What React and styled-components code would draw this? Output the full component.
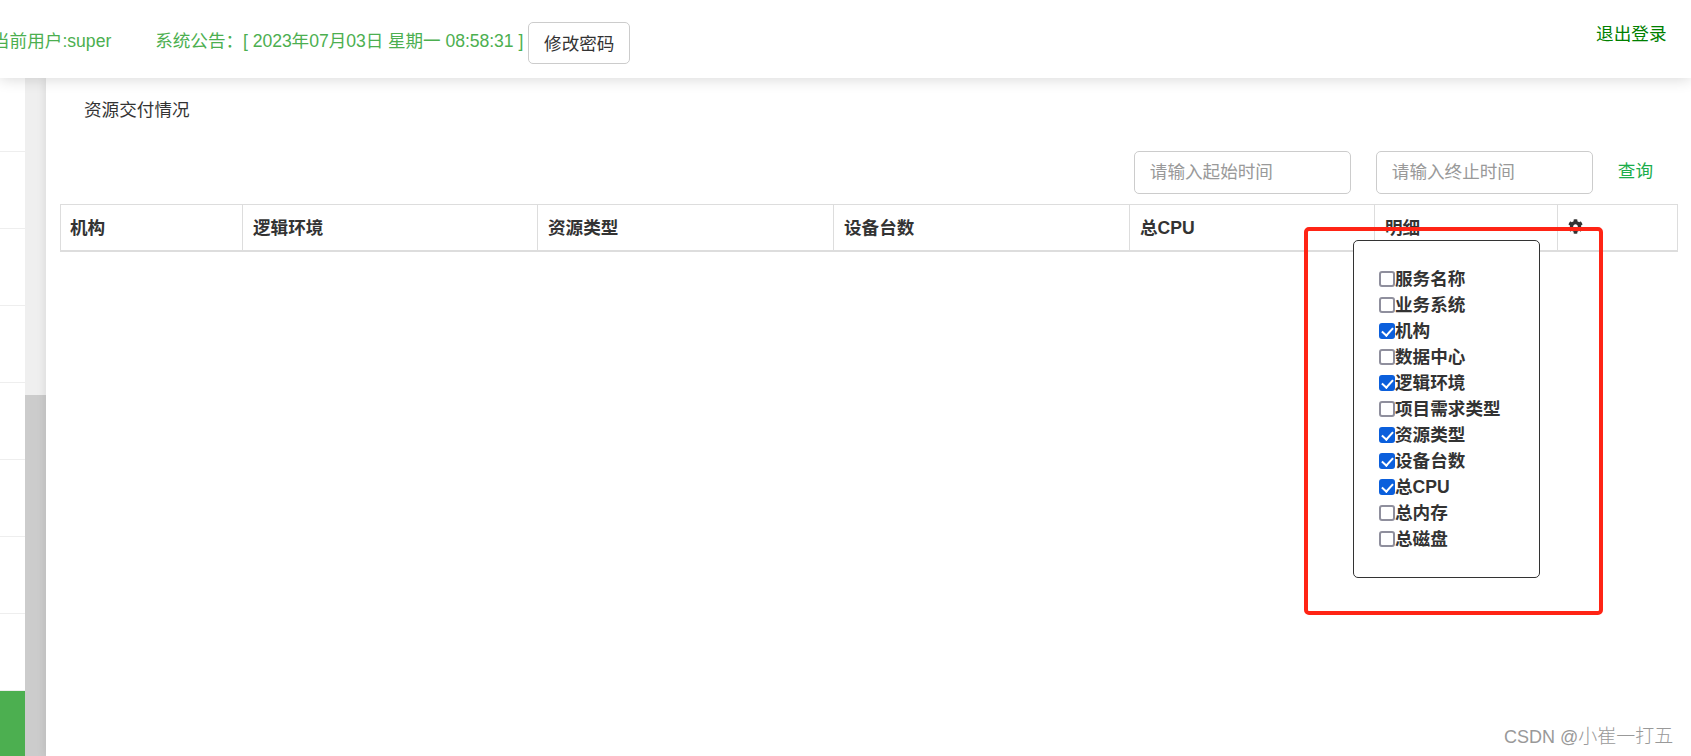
import React from "react";
import styled, { createGlobalStyle } from "styled-components";
import { FaCog } from "react-icons/fa";

const Global = createGlobalStyle`
  html, body { margin: 0; padding: 0; background: #fff; }
  body { font-family: "Liberation Sans", "Noto Sans CJK SC", sans-serif; font-size: 17.6px; color: #333; overflow: hidden; }
  * { box-sizing: border-box; }
`;

const Page = styled.div`
  position: relative;
  width: 1691px;
  height: 756px;
  overflow: hidden;
  display: flex;
  flex-direction: column;
`;

const Header = styled.header`
  position: relative;
  z-index: 2;
  flex: 0 0 78px;
  display: flex;
  align-items: flex-start;
  padding: 22px 24.5px 0 0;
  background: #fff;
  box-shadow: 0 1px 14px rgba(0, 0, 0, 0.16);
`;

const Notice = styled.span`
  margin: 7px 0 0 ${(p) => p.$left}px;
  color: #4caf50;
  line-height: 24px;
  letter-spacing: ${(p) => p.$tracking || 0}px;
  white-space: nowrap;
`;

const PasswordButton = styled.button`
  margin-left: 5px;
  width: 102px;
  height: 42px;
  padding: 0 0 2px;
  font: inherit;
  color: #333;
  background: #fff;
  border: 1px solid #ccc;
  border-radius: 5px;
`;

const Logout = styled.a`
  margin-left: auto;
  color: #008000;
  line-height: 24px;
`;

const Body = styled.div`
  flex: 1;
  display: flex;
  min-height: 0;
`;

const Sidebar = styled.nav`
  flex: 0 0 25px;
  overflow: hidden;
  background: #fff;
  display: flex;
  flex-direction: column;
  margin-top: -3px;
`;

const SideRow = styled.div`
  flex: 0 0 77px;
  border-bottom: 1px solid #eee;
`;

const SideActive = styled.div`
  flex: 1;
  background: #4caf50;
`;

const ScrollTrack = styled.div`
  flex: 0 0 21px;
  background: #efefef;
  padding-top: 317px;
  display: flex;
`;

const ScrollThumb = styled.div`
  flex: 1;
  background: #ccc;
`;

const Main = styled.main`
  position: relative;
  flex: 1;
  min-width: 0;
  padding: 20px 13px 0 14px;
  background: #fff;
  box-shadow: -2px 0 8px rgba(0, 0, 0, 0.08);
`;

const Title = styled.h2`
  margin: 0 0 29px 24px;
  font-size: 17.6px;
  font-weight: 400;
  line-height: 24px;
  color: #333;
`;

const Toolbar = styled.div`
  display: flex;
  justify-content: flex-end;
  align-items: center;
  gap: 25px;
  padding-right: 25px;
  margin-bottom: 10px;
`;

const DateInput = styled.input`
  width: 217px;
  height: 43px;
  padding: 0 15px;
  font: inherit;
  color: #333;
  border: 1px solid #ccc;
  border-radius: 5px;
  outline: none;
  &::placeholder { color: #999; opacity: 1; }
`;

const Query = styled.a`
  padding-bottom: 4px;
  color: #1aad4b;
  line-height: 24px;
`;

const TableWrap = styled.div`
  position: relative;
`;

const HeadRow = styled.div`
  display: grid;
  grid-template-columns: 181px 295px 296px 296px 245px 183px 120px;
  width: 1618px;
  height: 48px;
  border: 1px solid #ddd;
  border-bottom-width: 2px;
`;

const HeadCell = styled.div`
  display: flex;
  align-items: center;
  padding: 0 0 3px 10px;
  font-weight: 700;
  color: #333;
  &:first-child { padding-left: 9px; }
  & + & { border-left: 1px solid #ddd; }
`;

const Popover = styled.div`
  position: absolute;
  top: 36px;
  left: 1293px;
  width: 187px;
  height: 338px;
  padding: 25px 0 0 25px;
  background: #fff;
  border: 1px solid #333;
  border-radius: 5px;
`;

const Option = styled.label`
  display: flex;
  align-items: center;
  height: 26px;
  font-weight: 700;
  color: #333;
  white-space: nowrap;
`;

const OptionText = styled.span`
  padding-bottom: 3px;
`;

const Check = styled.input`
  appearance: none;
  position: relative;
  flex: 0 0 16px;
  width: 16px;
  height: 16px;
  margin: 0;
  background: #fff;
  border: 2px solid #8f8f9d;
  border-radius: 3px;
  &:checked {
    background: #0b5fdc;
    border-color: #0b5fdc;
  }
  &:checked::after {
    content: "";
    position: absolute;
    left: 3px;
    top: 0;
    width: 5px;
    height: 9px;
    border: solid #fff;
    border-width: 0 2px 2px 0;
    transform: rotate(42deg);
  }
`;

const Annotation = styled.div`
  position: absolute;
  left: 1304px;
  top: 227px;
  width: 299px;
  height: 388px;
  border: 4px solid #ff2415;
  border-radius: 5px;
  pointer-events: none;
  z-index: 3;
`;

const Watermark = styled.div`
  position: absolute;
  left: 1504px;
  top: 725px;
  font-size: 18px;
  line-height: 24px;
  color: #999;
  white-space: nowrap;
  z-index: 3;
`;

const WatermarkName = styled.span`
  font-size: 19px;
  font-weight: 300;
`;

const columns = ["机构", "逻辑环境", "资源类型", "设备台数", "总CPU", "明细"];
const options = [
  ["服务名称", false],
  ["业务系统", false],
  ["机构", true],
  ["数据中心", false],
  ["逻辑环境", true],
  ["项目需求类型", false],
  ["资源类型", true],
  ["设备台数", true],
  ["总CPU", true],
  ["总内存", false],
  ["总磁盘", false],
];

export default function App() {
  return (
    <Page>
      <Global />
      <Header>
        <Notice $left={-8}>当前用户:super</Notice>
        <Notice $left={44} $tracking={-0.05}>
          系统公告：[ 2023年07月03日 星期一 08:58:31 ]
        </Notice>
        <PasswordButton>修改密码</PasswordButton>
        <Logout>退出登录</Logout>
      </Header>
      <Body>
        <Sidebar>
          {Array.from({ length: 8 }, (_, i) => (
            <SideRow key={i} />
          ))}
          <SideActive />
        </Sidebar>
        <ScrollTrack>
          <ScrollThumb />
        </ScrollTrack>
        <Main>
          <Title>资源交付情况</Title>
          <Toolbar>
            <DateInput placeholder="请输入起始时间" />
            <DateInput placeholder="请输入终止时间" />
            <Query>查询</Query>
          </Toolbar>
          <TableWrap>
            <HeadRow>
              {columns.map((c) => (
                <HeadCell key={c}>{c}</HeadCell>
              ))}
              <HeadCell>
                <FaCog size={15} />
              </HeadCell>
            </HeadRow>
            <Popover>
              {options.map(([label, on]) => (
                <Option key={label}>
                  <Check type="checkbox" defaultChecked={on} />
                  <OptionText>{label}</OptionText>
                </Option>
              ))}
            </Popover>
          </TableWrap>
        </Main>
      </Body>
      <Annotation />
      <Watermark>
        CSDN @<WatermarkName>小崔一打五</WatermarkName>
      </Watermark>
    </Page>
  );
}
